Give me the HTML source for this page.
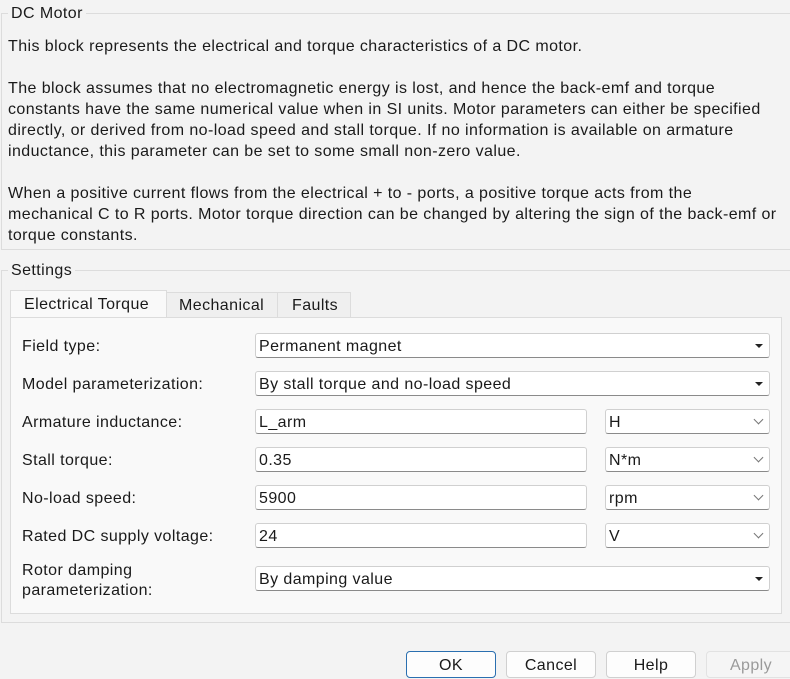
<!DOCTYPE html>
<html><head><style>
body{margin:0;width:790px;height:678px;background:#f3f3f3;font-family:"Liberation Sans",sans-serif;font-size:16px;color:#1a1a1a;position:relative;overflow:hidden;letter-spacing:0.42px}
.a{position:absolute;white-space:nowrap}
.gl{position:absolute;height:1px;background:#dcdcdc}
.gv{position:absolute;width:1px;background:#dcdcdc}
.box{position:absolute;background:#fff;border:1px solid #d0d0d0;border-bottom-color:#8a8a8a;border-radius:3px;box-sizing:border-box;height:25px;padding:4px 0 0 3px;white-space:nowrap}
.tri{position:absolute;right:6px;top:10px;width:0;height:0;border-left:4px solid transparent;border-right:4px solid transparent;border-top:4px solid #222}
.chev{position:absolute;right:7px;top:6px;width:6px;height:6px;border-right:1px solid #777;border-bottom:1px solid #777;transform:rotate(45deg)}
.btn{position:absolute;top:651px;height:27px;width:90px;box-sizing:border-box;border:1px solid #d0d0d0;border-radius:4px;background:#fdfdfd;text-align:center;line-height:27px}
</style></head><body>
<div class="gl" style="left:2px;top:13px;width:788px"></div>
<div class="gv" style="left:1px;top:13px;height:236px"></div>
<div class="a" style="left:8px;top:5px;background:#f3f3f3;padding:0 3px">DC Motor</div>
<div class="a" style="left:8px;top:36px;line-height:21px">This block represents the electrical and torque characteristics of a DC motor.<br><br>The block assumes that no electromagnetic energy is lost, and hence the back-emf and torque<br>constants have the same numerical value when in SI units. Motor parameters can either be specified<br>directly, or derived from no-load speed and stall torque. If no information is available on armature<br>inductance, this parameter can be set to some small non-zero value.<br><br>When a positive current flows from the electrical + to - ports, a positive torque acts from the<br>mechanical C to R ports. Motor torque direction can be changed by altering the sign of the back-emf or<br>torque constants.</div>
<div class="gl" style="left:1px;top:249px;width:789px"></div>
<div class="gl" style="left:2px;top:270px;width:788px"></div>
<div class="gv" style="left:1px;top:270px;height:352px"></div>
<div class="gl" style="left:1px;top:622px;width:789px"></div>
<div class="a" style="left:8px;top:262px;background:#f3f3f3;padding:0 3px">Settings</div>
<div class="a" style="left:10px;top:290px;width:155px;height:27px;background:#f9f9f9;border:1px solid #dcdcdc;border-bottom:none"></div>
<div class="a" style="left:166px;top:292px;width:110px;height:24px;background:#efefef;border:1px solid #dcdcdc;border-bottom:none"></div>
<div class="a" style="left:277px;top:292px;width:72px;height:24px;background:#efefef;border:1px solid #dcdcdc;border-bottom:none"></div>
<div class="a" style="left:24px;top:296px">Electrical Torque</div>
<div class="a" style="left:179px;top:297px">Mechanical</div>
<div class="a" style="left:292px;top:297px">Faults</div>
<div class="a" style="left:10px;top:317px;width:770px;height:295px;border:1px solid #dcdcdc;background:#f9f9f9"></div>
<div class="a" style="left:22px;top:338px">Field type:</div>
<div class="box" style="left:255px;top:333px;width:515px">Permanent magnet<div class="tri"></div></div>
<div class="a" style="left:22px;top:376px">Model parameterization:</div>
<div class="box" style="left:255px;top:371px;width:515px">By stall torque and no-load speed<div class="tri"></div></div>
<div class="a" style="left:22px;top:414px">Armature inductance:</div>
<div class="box" style="left:255px;top:409px;width:332px">L_arm</div>
<div class="box" style="left:605px;top:409px;width:165px">H<div class="chev"></div></div>
<div class="a" style="left:22px;top:452px">Stall torque:</div>
<div class="box" style="left:255px;top:447px;width:332px">0.35</div>
<div class="box" style="left:605px;top:447px;width:165px">N*m<div class="chev"></div></div>
<div class="a" style="left:22px;top:490px">No-load speed:</div>
<div class="box" style="left:255px;top:485px;width:332px">5900</div>
<div class="box" style="left:605px;top:485px;width:165px">rpm<div class="chev"></div></div>
<div class="a" style="left:22px;top:528px">Rated DC supply voltage:</div>
<div class="box" style="left:255px;top:523px;width:332px">24</div>
<div class="box" style="left:605px;top:523px;width:165px">V<div class="chev"></div></div>
<div class="a" style="left:22px;top:561px;line-height:20px">Rotor damping<br>parameterization:</div>
<div class="box" style="left:255px;top:566px;width:515px">By damping value<div class="tri"></div></div>
<div class="btn" style="left:406px;border-color:#2a6fb0">OK</div>
<div class="btn" style="left:506px">Cancel</div>
<div class="btn" style="left:606px">Help</div>
<div class="btn" style="left:706px;color:#9a9a9a;background:#f5f5f5;border-color:#e2e2e2">Apply</div>
</body></html>
